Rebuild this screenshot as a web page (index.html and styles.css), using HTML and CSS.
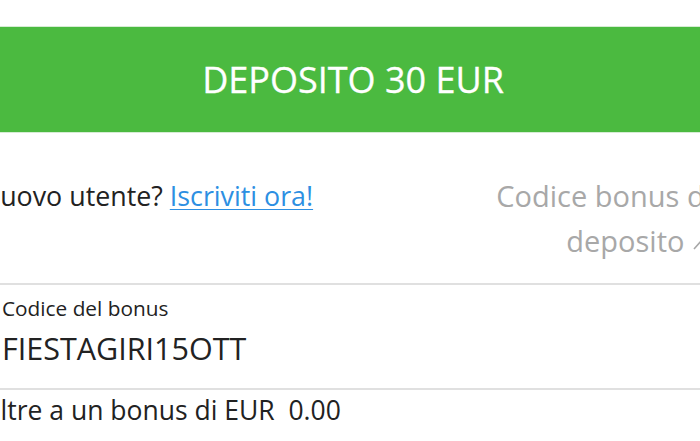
FILE: index.html
```html
<!DOCTYPE html>
<html lang="it">
<head>
<meta charset="utf-8">
<link rel="stylesheet" href="styles.css">
</head>
<body>
<div class="page">
  <button class="deposit">DEPOSITO 30 EUR</button>
  <div class="info-row">
    <p class="new-user">Nuovo utente? <a href="#">Iscriviti ora!</a></p>
    <p class="bonus-toggle">Codice bonus di<br>deposito <svg class="chev" width="20" height="12" viewBox="0 0 20 12"><path d="M2 11 L10 2 L18 11" fill="none" stroke="#a8a8a8" stroke-width="1.6"/></svg></p>
  </div>
  <div class="field">
    <label class="field-label">Codice del bonus</label>
    <div class="field-value">FIESTAGIRI15OTT</div>
  </div>
  <p class="bonus-line">Oltre a un bonus di EUR&nbsp; 0.00</p>
</div>
</body>
</html>
```

FILE: styles.css
```css
html, body {
  margin: 0;
  padding: 0;
  overflow: hidden;
  background: #fff;
}
body {
  font-family: "Open Sans", "Noto Sans", sans-serif;
  color: #222;
}
.page {
  margin: 0 -12px 0 -20px;
  padding-top: 26px;
}
.deposit {
  display: block;
  width: 100%;
  height: 107px;
  border: none;
  border-top: 1px solid #d6ecd4;
  border-bottom: 1px solid #d6ecd4;
  background: #4bba40;
  color: #fff;
  font-family: "Open Sans", sans-serif;
  font-size: 36px;
  font-weight: 400;
  padding: 0 0 0 14px;
  text-align: center;
  box-sizing: border-box;
  -webkit-text-stroke: 0.3px #fff;
}
.info-row {
  display: flex;
  justify-content: space-between;
  align-items: flex-start;
  padding: 40px 0 20px 0;
}
.new-user {
  margin: 0;
  font-size: 26.8px;
  line-height: 45px;
}
.new-user a {
  color: #2d8fe2;
  text-decoration: underline;
  text-underline-offset: 3px;
  text-decoration-thickness: 1px;
}
.bonus-toggle {
  margin: 0;
  font-size: 29px;
  line-height: 45px;
  color: #a8a8a8;
  text-align: right;
}
.chev {
  vertical-align: middle;
}
.field {
  border-top: 2px solid #e0e0e0;
  border-bottom: 2px solid #e0e0e0;
  padding: 9px 0 14px 22px;
  display: flex;
  flex-direction: column;
}
.field-label {
  font-size: 20.8px;
  line-height: 28px;
}
.field-value {
  font-size: 30.5px;
  line-height: 52px;
}
.bonus-line {
  margin: 0;
  font-size: 26.5px;
  line-height: 40px;
}
```
